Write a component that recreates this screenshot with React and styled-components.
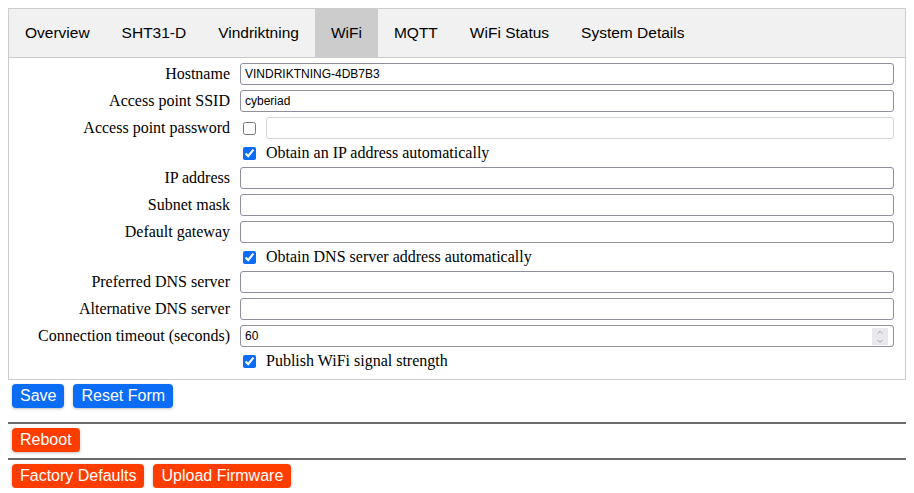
import React from 'react';
import styled, { createGlobalStyle } from 'styled-components';
import { ChevronUp, ChevronDown } from 'lucide-react';

const GlobalStyle = createGlobalStyle`
  body {
    margin: 8px;
    background: #fff;
    font-family: "Liberation Serif", "Times New Roman", serif;
    font-size: 16px;
    color: #000;
  }
`;

const TabBar = styled.div`
  display: flex;
  border: 1px solid #ccc;
  background: #f1f1f1;
`;

const Tab = styled.div`
  padding: 14px 16px;
  font-family: "Liberation Sans", Arial, sans-serif;
  font-size: 15.5px;
  line-height: 20px;
  color: #000;
  background: ${(p) => (p.active ? '#ccc' : 'transparent')};
`;

const TabContent = styled.div`
  border: 1px solid #ccc;
  border-top: none;
  padding: 5px 11px 9px 12px;
`;

const FormGrid = styled.div`
  display: grid;
  grid-template-columns: 209px 1fr;
  column-gap: 10px;
  row-gap: 5px;
`;

const Label = styled.label`
  text-align: right;
  align-self: center;
  line-height: 18px;
  white-space: nowrap;
`;

const Field = styled.div`
  position: relative;
  display: flex;
  align-items: center;
  gap: 10px;
  grid-column: 2;
  height: ${(p) => (p.check ? '18px' : '22px')};
`;

const TextInput = styled.input`
  box-sizing: border-box;
  flex: 1;
  height: 22px;
  min-width: 0;
  margin: 0;
  padding: 1px 4px;
  border: 1px solid ${(p) => (p.disabled ? '#d4d4da' : '#8f8f9d')};
  border-radius: 3px;
  background: #fff;
  font-family: "Liberation Sans", Arial, sans-serif;
  font-size: 12px;
  color: #000;
  -moz-appearance: textfield;
  &::-webkit-inner-spin-button,
  &::-webkit-outer-spin-button {
    -webkit-appearance: none;
    margin: 0;
  }
`;

const Spinner = styled.div`
  position: absolute;
  right: 6px;
  top: 3px;
  width: 16px;
  height: 17px;
  background: #e9e9ed;
  display: flex;
  flex-direction: column;
  align-items: center;
  justify-content: center;
  color: #5f5f6c;
`;

const Check = styled.input`
  width: 13px;
  height: 13px;
  margin: 0 0 0 3px;
  accent-color: #0b6cf5;
`;

const CheckText = styled.span`
  line-height: 18px;
  white-space: nowrap;
`;

const ButtonRow = styled.div`
  display: flex;
  gap: 9px;
  padding: 0 4px;
  margin: ${(p) => p.margin || '0'};
`;

const Button = styled.button`
  font-family: "Liberation Sans", Arial, sans-serif;
  font-size: 16px;
  line-height: 18px;
  height: 24px;
  padding: 0 8px;
  border: none;
  border-radius: 4px;
  color: #fff;
  background: ${(p) => (p.danger ? '#ff3d00' : '#0b6cf5')};
  box-shadow: 0 1px 3px rgba(0, 0, 0, 0.25);
`;

const Rule = styled.hr`
  margin: 0;
  height: 0;
  border: none;
  border-top: 2px solid #6b6b6b;
`;

const tabs = ['Overview', 'SHT31-D', 'Vindriktning', 'WiFi', 'MQTT', 'WiFi Status', 'System Details'];

const TextRow = ({ label, value = '', type = 'text', spinner }) => (
  <>
    <Label>{label}</Label>
    <Field>
      <TextInput type={type} defaultValue={value} />
      {spinner && (
        <Spinner>
          <ChevronUp size={10} strokeWidth={1.4} />
          <ChevronDown size={10} strokeWidth={1.4} />
        </Spinner>
      )}
    </Field>
  </>
);

const CheckRow = ({ text }) => (
  <Field check>
    <Check type="checkbox" defaultChecked />
    <CheckText>{text}</CheckText>
  </Field>
);

export default function App() {
  return (
    <>
      <GlobalStyle />
      <TabBar>
        {tabs.map((t) => (
          <Tab key={t} active={t === 'WiFi'}>{t}</Tab>
        ))}
      </TabBar>
      <TabContent>
        <FormGrid>
          <TextRow label="Hostname" value="VINDRIKTNING-4DB7B3" />
          <TextRow label="Access point SSID" value="cyberiad" />
          <Label>Access point password</Label>
          <Field>
            <Check type="checkbox" />
            <TextInput type="password" disabled />
          </Field>
          <CheckRow text="Obtain an IP address automatically" />
          <TextRow label="IP address" />
          <TextRow label="Subnet mask" />
          <TextRow label="Default gateway" />
          <CheckRow text="Obtain DNS server address automatically" />
          <TextRow label="Preferred DNS server" />
          <TextRow label="Alternative DNS server" />
          <TextRow label="Connection timeout (seconds)" value="60" type="number" spinner />
          <CheckRow text="Publish WiFi signal strength" />
        </FormGrid>
      </TabContent>
      <ButtonRow margin="4px 0 14px">
        <Button>Save</Button>
        <Button>Reset Form</Button>
      </ButtonRow>
      <Rule />
      <ButtonRow margin="4px 0 6px">
        <Button danger>Reboot</Button>
      </ButtonRow>
      <Rule />
      <ButtonRow margin="4px 0 0">
        <Button danger>Factory Defaults</Button>
        <Button danger>Upload Firmware</Button>
      </ButtonRow>
    </>
  );
}
